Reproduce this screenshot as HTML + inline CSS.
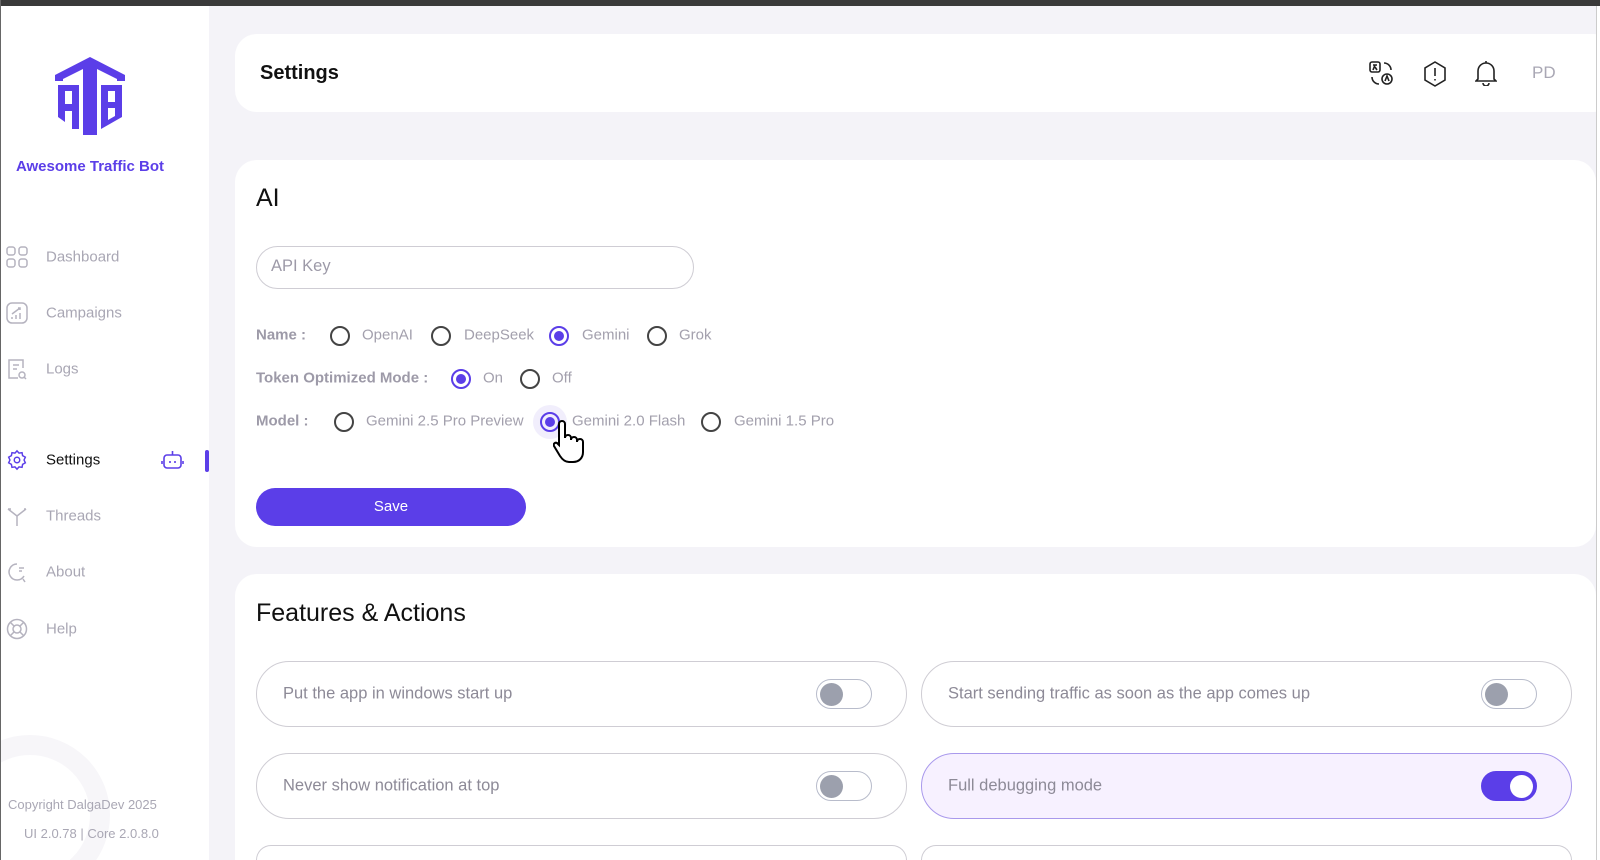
<!DOCTYPE html>
<html><head><meta charset="utf-8"><style>
*{box-sizing:border-box;margin:0;padding:0}
html,body{width:1600px;height:860px;overflow:hidden}
body{background:#f4f3f8;font-family:"Liberation Sans",sans-serif}
#wrap{position:relative;width:1600px;height:860px;overflow:hidden;background:#f4f3f8}
.abs{position:absolute}
#top{left:0;top:0;width:1600px;height:6px;background:#3a3a3a}
#lb{left:0;top:0;width:1px;height:860px;background:#666}
#rb{left:1596px;top:0;width:4px;height:860px;background:#fff;border-left:1px solid #ccc}
#side{left:1px;top:6px;width:208px;height:854px;background:#fff}
.nav{position:absolute;left:46px;font-size:15px;color:#a9a7b4;transform:translateY(-50%)}
.ic{position:absolute;left:6px;width:22px;height:22px;transform:translateY(-50%)}
.card{position:absolute;background:#fff;border-radius:22px}
.lbl{position:absolute;font-size:15px;color:#9d9aa8;font-weight:bold;transform:translateY(-50%)}
.rt{position:absolute;font-size:15px;color:#a3a0ad;transform:translateY(-50%)}
.rd{position:absolute;width:20px;height:20px;border:2px solid #444;border-radius:50%;transform:translate(-50%,-50%)}
.rd.on{border-color:#5b3ee8}
.rd.on::after{content:"";position:absolute;left:3px;top:3px;width:10px;height:10px;border-radius:50%;background:#5b3ee8}
.opt{position:absolute;height:66px;border:1.5px solid #cfcdd4;border-radius:33px;background:#fff}
.opt span{position:absolute;left:26px;top:50%;transform:translateY(-50%);font-size:16.5px;color:#8d8a97}
.tg{position:absolute;right:34px;top:50%;transform:translateY(-50%);width:56px;height:30px;border:1.5px solid #b8bccb;border-radius:15px;background:#fff}
.tg::after{content:"";position:absolute;left:3px;top:2.5px;width:23px;height:23px;border-radius:50%;background:#9ca0ad}
.tg.on{background:#5b3ee8;border-color:#5b3ee8}
.tg.on::after{left:auto;right:3px;background:#fff}
.bo{position:absolute;top:845px;height:15px;border:1.5px solid #cfcdd4;border-bottom:none;border-radius:33px 33px 0 0;background:#fff}
</style></head><body><div id="wrap">
<div class="abs" id="side"></div>
<div class="abs" style="left:-50px;top:735px;width:160px;height:125px;overflow:hidden"><div style="width:160px;height:160px;border-radius:50%;border:20px solid #f7f6f9"></div></div>
<svg class="abs" style="left:55px;top:57px" width="70" height="78" viewBox="0 0 70 78">
<path d="M35 0 L70 18 L70 24 L62 24 L62 22 L42 12 L42 78 L35 78 L35 0 Z" fill="#5b3ee8"/>
<path d="M35 0 L0 18 L0 24 L8 24 L8 22 L28 12 L28 78 L35 78Z" fill="#5b3ee8"/>
<path d="M3 28 H24 V72 H17 V54 H10 V65 L3 60 Z M10 34 V47 H17 V34 Z" fill="#5b3ee8"/>
<path d="M46 28 H67 V60 L46 72 Z M53 34 V45 H60 V34 Z M53 51 V63 L60 59 V51 Z" fill="#5b3ee8"/>
</svg>
<div class="abs" style="left:0;width:180px;top:158px;text-align:center;font-size:15px;font-weight:bold;color:#5b3ee8">Awesome Traffic Bot</div>

<svg class="ic" style="top:257px" viewBox="0 0 22 22" fill="none" stroke="#b5b3bf" stroke-width="1.5"><rect x="1" y="1" width="8" height="8" rx="2.5"/><rect x="13" y="1" width="8" height="8" rx="2.5"/><rect x="1" y="13" width="8" height="8" rx="2.5"/><rect x="13" y="13" width="8" height="8" rx="2.5"/></svg>
<div class="nav" style="top:257px">Dashboard</div>
<svg class="ic" style="top:313px" viewBox="0 0 22 22" fill="none" stroke="#b5b3bf" stroke-width="1.5"><rect x="1" y="1" width="20" height="20" rx="5"/><path d="M6 17v-2M10 17v-4M14 17v-6M6 12l8-6M12 6h2v2"/></svg>
<div class="nav" style="top:313px">Campaigns</div>
<svg class="ic" style="top:369px" viewBox="0 0 22 22" fill="none" stroke="#b5b3bf" stroke-width="1.5"><path d="M12 20H3V2h14v8M7 7h6M7 11h4"/><circle cx="16" cy="17" r="3"/><path d="M18 19l2 2"/></svg>
<div class="nav" style="top:369px">Logs</div>
<svg class="ic" style="top:460px" viewBox="0 0 24 24" fill="none" stroke="#5b3ee8" stroke-width="1.6"><circle cx="12" cy="12" r="3"/><path d="M12 2l2.2 2.5 3.3-.5.6 3.3 3 1.6-1.4 3.1 1.4 3.1-3 1.6-.6 3.3-3.3-.5L12 22l-2.2-2.5-3.3.5-.6-3.3-3-1.6 1.4-3.1L2.9 8.9l3-1.6.6-3.3 3.3.5z"/></svg>
<div class="nav" style="top:460px;color:#111">Settings</div>
<svg class="abs" style="left:161px;top:449px" width="23" height="22" viewBox="0 0 23 22" fill="none" stroke="#5b3ee8" stroke-width="1.6"><rect x="3" y="6" width="17" height="13" rx="3"/><path d="M11.5 6V2M1 12v3M22 12v3M9 12v2M14 12v2"/></svg>
<div class="abs" style="left:205px;top:450px;width:4px;height:22px;background:#5b3ee8;border-radius:2px"></div>
<svg class="ic" style="top:516px" viewBox="0 0 22 22" fill="none" stroke="#b5b3bf" stroke-width="1.5"><path d="M11 21V11L2 4M11 11l9-7M2 4h3M20 4l-2 0"/></svg>
<div class="nav" style="top:516px">Threads</div>
<svg class="ic" style="top:572px" viewBox="0 0 22 22" fill="none" stroke="#b5b3bf" stroke-width="1.5"><path d="M18 15A8 8 0 1 1 11 3M13 7h5M13 10h3M17 18l2 3"/></svg>
<div class="nav" style="top:572px">About</div>
<svg class="ic" style="top:629px" viewBox="0 0 22 22" fill="none" stroke="#b5b3bf" stroke-width="1.5"><circle cx="11" cy="11" r="9.5"/><circle cx="11" cy="11" r="4"/><path d="M4.5 4.5l3.5 3.5M17.5 4.5L14 8M4.5 17.5L8 14M17.5 17.5L14 14"/></svg>
<div class="nav" style="top:629px">Help</div>
<div class="abs" style="left:8px;top:797px;font-size:13px;color:#a9a7b4">Copyright DalgaDev 2025</div>
<div class="abs" style="left:24px;top:826px;font-size:13px;color:#a9a7b4">UI 2.0.78 | Core 2.0.8.0</div>

<div class="card" style="left:235px;top:34px;width:1380px;height:78px"></div>
<div class="abs" style="left:260px;top:62px;font-size:20px;font-weight:bold;color:#111">Settings</div>
<svg class="abs" style="left:1369px;top:61px" width="25" height="25" viewBox="0 0 25 25" fill="none" stroke="#222" stroke-width="1.6"><rect x="1" y="1" width="10" height="10" rx="2"/><path d="M4 4h4M6 4l-2 5M6 6l2 3"/><circle cx="18" cy="18" r="5"/><path d="M16 20l2-5 2 5M15 2a7 7 0 0 1 7 7M10 23a7 7 0 0 1-7-7"/></svg>
<svg class="abs" style="left:1423px;top:61px" width="24" height="26" viewBox="0 0 24 26" fill="none" stroke="#222" stroke-width="1.6"><path d="M12 1l10 6v12l-10 6-10-6V7z"/><path d="M12 7v8M12 18v1.5"/></svg>
<svg class="abs" style="left:1475px;top:60px" width="22" height="26" viewBox="0 0 22 26" fill="none" stroke="#222" stroke-width="1.6"><path d="M3 19V11a8 8 0 0 1 16 0v8l2 2H1zM8 23a3 3 0 0 0 6 0M11 1v2"/></svg>
<div class="abs" style="left:1532px;top:63px;font-size:17px;color:#a9a7b4">PD</div>

<div class="card" style="left:235px;top:160px;width:1361px;height:387px"></div>
<div class="abs" style="left:256px;top:184px;font-size:25px;color:#111">AI</div>
<div class="abs" style="left:256px;top:246px;width:438px;height:43px;border:1.5px solid #cfcdd4;border-radius:22px"></div>
<div class="abs" style="left:271px;top:257px;font-size:16.5px;color:#9d9aa8">API Key</div>

<div class="lbl" style="left:256px;top:335px">Name :</div>
<div class="rd" style="left:340px;top:336px"></div><div class="rt" style="left:362px;top:335px">OpenAI</div>
<div class="rd" style="left:441px;top:336px"></div><div class="rt" style="left:464px;top:335px">DeepSeek</div>
<div class="rd on" style="left:559px;top:336px"></div><div class="rt" style="left:582px;top:335px">Gemini</div>
<div class="rd" style="left:657px;top:336px"></div><div class="rt" style="left:679px;top:335px">Grok</div>

<div class="lbl" style="left:256px;top:378px">Token Optimized Mode :</div>
<div class="rd on" style="left:461px;top:379px"></div><div class="rt" style="left:483px;top:378px">On</div>
<div class="rd" style="left:530px;top:379px"></div><div class="rt" style="left:552px;top:378px">Off</div>

<div class="lbl" style="left:256px;top:421px">Model :</div>
<div class="rd" style="left:344px;top:422px"></div><div class="rt" style="left:366px;top:421px">Gemini 2.5 Pro Preview</div>
<div class="abs" style="left:533px;top:405px;width:34px;height:34px;border-radius:50%;background:#f1eefc"></div>
<div class="rd on" style="left:550px;top:422px"></div><div class="rt" style="left:572px;top:421px">Gemini 2.0 Flash</div>
<div class="rd" style="left:711px;top:422px"></div><div class="rt" style="left:734px;top:421px">Gemini 1.5 Pro</div>
<svg class="abs" style="left:553px;top:420px" width="34" height="44" viewBox="0 0 34 44"><path d="M6 4a3 3 0 0 1 6 0v14a3 3 0 0 1 6 0v2a3 3 0 0 1 6 0v2a3 3 0 0 1 6 0v10c0 6-4 10-10 10h-4c-4 0-7-3-9-6L1 26c-1-2 1-4 3-3l2 2z" fill="#fff" stroke="#000" stroke-width="2"/></svg>

<div class="abs" style="left:256px;top:488px;width:270px;height:38px;border-radius:19px;background:#5b3ee8;color:#fff;font-size:15px;text-align:center;line-height:38px">Save</div>

<div class="abs" style="left:235px;top:574px;width:1361px;height:286px;background:#fff;border-radius:22px 22px 0 0"></div>
<div class="abs" style="left:256px;top:599px;font-size:25px;color:#111">Features &amp; Actions</div>
<div class="opt" style="left:256px;top:661px;width:651px"><span>Put the app in windows start up</span><div class="tg"></div></div>
<div class="opt" style="left:921px;top:661px;width:651px"><span>Start sending traffic as soon as the app comes up</span><div class="tg"></div></div>
<div class="opt" style="left:256px;top:753px;width:651px"><span>Never show notification at top</span><div class="tg"></div></div>
<div class="opt" style="left:921px;top:753px;width:651px;background:#f7f1ff;border-color:#a999ec"><span>Full debugging mode</span><div class="tg on"></div></div>
<div class="bo" style="left:256px;width:651px"></div>
<div class="bo" style="left:921px;width:651px"></div>

<div class="abs" id="rb"></div>
<div class="abs" id="top"></div>
<div class="abs" id="lb"></div>
</div></body></html>
